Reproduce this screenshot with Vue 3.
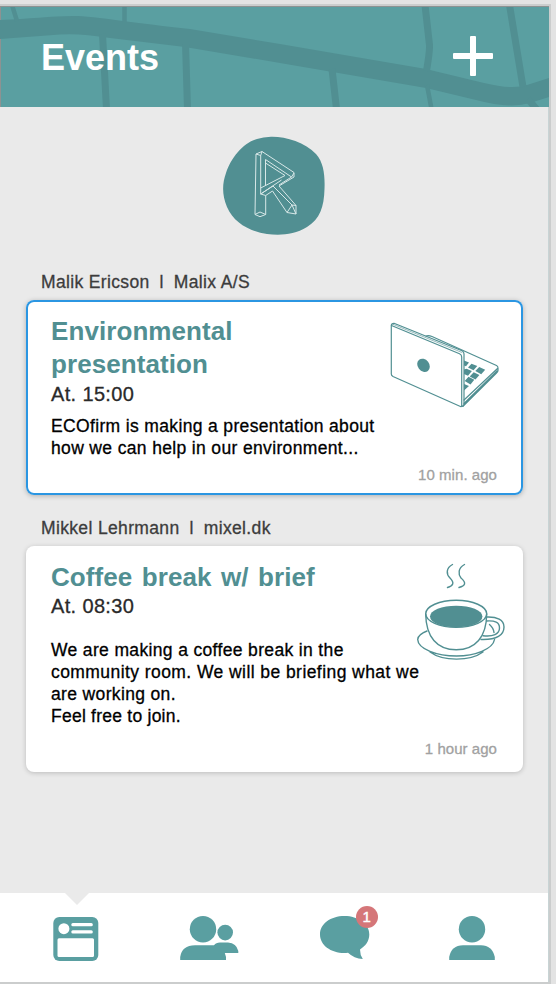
<script setup>
const events = [
  {
    id: 'environment',
    author: 'Malik Ericson',
    company: 'Malix A/S',
    title: ['Environmental', 'presentation'],
    time: 'At. 15:00',
    text: ['ECOfirm is making a presentation about', 'how we can help in our environment...'],
    ago: '10 min. ago',
    selected: true,
    art: 'laptop'
  },
  {
    id: 'coffee',
    author: 'Mikkel Lehrmann',
    company: 'mixel.dk',
    title: ['Coffee break w/ brief'],
    time: 'At. 08:30',
    text: [
      'We are making a coffee break in the',
      'community room. We will be briefing what we',
      'are working on.',
      'Feel free to join.'
    ],
    ago: '1 hour ago',
    selected: false,
    art: 'coffee'
  }
]
</script>

<template>
  <div class="frame">
    <div class="screen">
      <header class="top">
        <svg class="map" viewBox="0 6 549 100" width="549" height="100" aria-hidden="true">
          <path class="road" d="M0 19C30 18 50 15 73 15C95 15 140 23 190 28L280 43L426 68L484 82Q513 89 527 84L549 77V96L530 102Q510 108 476 99L426 87L280 62L185 46L110 37Q80 32 60 33.500L0 38Z" />
          <g class="lanes">
            <path class="thin" d="M12 4L17 20M124.500 4V22M427 84L431.500 108" />
            <path d="M102.500 33L106.500 108M185.500 42L187.500 108M332 68L336.500 108M425 4L429.500 44Q430 49 426.500 70M509.500 4L523 86M528 98L538 110" />
          </g>
        </svg>
        <h1>Events</h1>
        <svg class="plus" viewBox="0 0 40 40" width="40" height="40">
          <rect x="17" width="6" height="40" rx="1" />
          <rect y="17" width="40" height="6" rx="1" />
        </svg>
      </header>

      <main class="feed">
        <svg class="logo" viewBox="0 0 130 120" width="130" height="120">
          <path class="blob" d="M61 11.700C75 11.300 95 17 106 29C114 38 115 51 114.500 64C114 82 110 94 97 102C84 110 70 110.500 57 109C39 106 24 98 17 82C12 70 12 59 16 48C21 33 33 18 47 14Q53 12 61 11.700Z" />
          <path class="wire" d="M46 29L52 26.500L84 47.500V52L69 61L86 80.500V89L77 87.500L62.500 66L55.700 70.500V89.500L50 91.700L45 89.500ZM46 29L50.700 30.500L52 26.500M50.700 30.500V63L75 50.500L55.500 38V60.500M55.500 38V34.500L81.500 52L84 48M81.500 52L69 60M50.700 63V69L71.500 55M50.700 69L55.700 70.500M45 89.500L50 87L55.700 89.500M50.700 69L63 61L82 80L77 87.500M82 80L86 80.500M82 80L86 89" />
        </svg>

        <section v-for="event in events" :key="event.id" class="entry" :class="event.art">
          <p class="byline"><span>{{ event.author }}</span><span>l</span><span>{{ event.company }}</span></p>
          <article class="card" :class="{ selected: event.selected }">
            <h2><span v-for="line in event.title" :key="line">{{ line }}</span></h2>
            <p class="time">{{ event.time }}</p>
            <p class="body"><span v-for="line in event.text" :key="line">{{ line }}</span></p>
            <p class="ago">{{ event.ago }}</p>

            <svg v-if="event.art === 'laptop'" class="art" viewBox="0 0 130 110" width="130" height="110">
              <g class="line thinline">
                <path d="M11.300 64V15.500Q11.300 13.500 14 13.300L82 40.700Q84 41.700 84 44V94.500Q83.500 96.500 81 96.700L13 66.500Q11.300 65.500 11.300 64Z" />
                <path d="M11.500 15.500L79.500 43.700Q81.700 44.700 81.700 47V96.500M46 26Q48.500 25 52 26.500L116.500 55.500Q118 56.300 118 58V60.500Q118 61.700 116.500 63L83 96.300M117.500 58.500L84 90M117 61L84 93.500" />
                <path class="faint" d="M13 14.300L82 42.500" />
              </g>
              <ellipse cx="43.500" cy="55.300" rx="5.800" ry="7.100" transform="rotate(-38 43.500 55.300)" />
              <path d="M84 50.500L89 52.500L86 56.200L84 55.500ZM88 57.500L91.500 53.700L97.300 56L93.500 60.300ZM95.300 61L99.200 57L105.200 59.800L101.200 64.300ZM84 59.500L86.500 58.700L91.900 61L88 65.700L84 64ZM89.700 66.500L93.700 62.300L99.400 65L95.500 69.500ZM84.700 71L88.500 66.800L94.300 69.800L90.500 74.500ZM84 74L89 76L84 80.500Z" />
            </svg>

            <svg v-else class="art" viewBox="0 0 110 115" width="110" height="115">
              <g class="line">
                <path d="M47.500 9.500C41 13 41 19 45 23C50 28 48 31 42.500 32.500M59.500 9.500C53 13 53 19 56 23C62 28 60 31 54 32.500" />
                <path d="M22 76C14.500 79 12.700 82 12.700 84.500C13 94 32 101 51.500 101C70 101 88 94 89.500 84.500M25 97C38 106.500 65 106.500 78 97M84.500 69.500Q88.500 73 89 77.500" />
                <path d="M81.500 62C92 61.500 99 65 99 72C99 80 92 85 76 84.500M81.500 66C90 65.500 94.500 67 94.500 73C94.500 79 88 82 78 80.700" />
                <path class="cup" d="M20.700 59C21 82 32 94.800 51.200 94.800S81.500 82 81.700 59" />
                <ellipse cx="51.200" cy="58.800" rx="30.500" ry="13.500" />
              </g>
              <ellipse cx="51.200" cy="61.500" rx="26.200" ry="10.800" />
            </svg>
          </article>
        </section>
      </main>

      <nav class="tabs">
        <svg class="news" viewBox="0 0 46 46" width="46" height="46">
          <rect x=".3" y=".9" width="45" height="44" rx="6" />
          <g class="cut">
            <circle cx="10.900" cy="12.700" r="5.500" />
            <rect x="18.300" y="7" width="21.500" height="3.300" rx="1.500" />
            <rect x="18.300" y="14.300" width="21.500" height="3.300" rx="1.500" />
            <rect x="4.500" y="22.300" width="36.500" height="18.700" rx="1.500" />
          </g>
        </svg>
        <svg viewBox="0 0 60 46" width="60" height="46">
          <circle cx="23" cy="13.200" r="13.200" />
          <circle cx="45.200" cy="16.600" r="7.800" />
          <path d="M.2 44V41Q2 29.300 15 29.300H34Q36 26.500 40 26.500H48Q56.500 27 58.300 35V37H44.800L46 41V44Z" />
        </svg>
        <div class="chat">
          <svg viewBox="0 0 50 46" width="50" height="46">
            <path d="M24.500.1C38 .1 49.300 8 49.300 18.500C49.300 25 45.500 30 40 33.500Q40 39 42.800 43Q34 42.500 28 36.800Q26 37 24.500 37C10.500 37 0 29 0 18.500S10.500.1 24.500.1Z" />
          </svg>
          <span class="badge">1</span>
        </div>
        <svg viewBox="0 0 46 46" width="46" height="46">
          <circle cx="23" cy="13.200" r="13.200" />
          <path d="M.2 44V41Q2.500 29.300 14 29.300H32Q43 29.300 45.800 41V44Z" />
        </svg>
      </nav>
    </div>
  </div>
</template>

<style>
body { margin: 0; background: #e3e3e3; }
</style>

<style scoped>
* { box-sizing: border-box; }
h1, h2, p { margin: 0; }
svg { display: block; flex: none; }
.frame {
  width: 556px;
  height: 984px;
  padding-top: 4px;
  background: #e3e3e3;
  font-family: "Liberation Sans", Arial, sans-serif;
  overflow: hidden;
}
.screen {
  width: 551px;
  height: 980px;
  border: solid #cbcdcd;
  border-width: 2px 2px 2px 0;
  display: flex;
  flex-direction: column;
  background: #eaeaea;
}
.top {
  position: relative;
  height: 100.500px;
  flex: none;
  display: flex;
  justify-content: space-between;
  align-items: flex-start;
  padding: 29px 56px 0 40px;
  background: #5a9fa1;
  border-top: 1px solid #8d9292;
  border-left: 1px solid #8d9292;
}
.map { position: absolute; left: -1px; top: -.500px; }
.road { fill: #518f92; }
.lanes { fill: none; stroke: #518f92; stroke-width: 7; }
.thin { stroke-width: 4.500; }
h1 {
  position: relative;
  font-size: 36px;
  line-height: 44px;
  color: #fff;
}
.plus { position: relative; fill: #fff; }
.feed {
  flex: 1;
  display: flex;
  flex-direction: column;
  padding: 18.500px 26px 0;
  border-right: 1px solid #c8d4d5;
}
.logo { align-self: center; margin-left: 1px; }
.blob { fill: #518f92; }
.wire { fill: none; stroke: #d8e8e8; stroke-width: 1; stroke-linejoin: round; }
.entry { width: 497px; padding-top: 27px; }
.coffee { padding-top: 23px; }
.byline {
  display: flex;
  gap: 10px;
  height: 28px;
  padding-left: 15px;
  font-size: 17.500px;
  line-height: 20px;
  letter-spacing: .350px;
  color: #3c3c3c;
  -webkit-text-stroke: .300px;
}
.card {
  position: relative;
  display: flex;
  flex-direction: column;
  height: 195px;
  padding: 15px 26px 10px 25px;
  border-radius: 8px;
  background: #fff;
  box-shadow: 0 1px 5px rgba(0, 0, 0, .2);
}
.card.selected { box-shadow: inset 0 0 0 2px #2b96e2, 0 1px 5px rgba(0, 0, 0, .25); }
.coffee .card { height: 226px; padding-bottom: 13px; }
h2 {
  font-size: 26px;
  line-height: 33px;
  letter-spacing: .080px;
  word-spacing: 2.100px;
  color: #518f92;
}
.coffee h2 { height: 32px; }
h2 span, .body span { display: block; white-space: nowrap; }
.time {
  font-size: 20px;
  line-height: 26px;
  color: #2a2a2a;
  letter-spacing: .350px;
  -webkit-text-stroke: .300px;
}
.body {
  margin-top: 8px;
  font-size: 17.500px;
  line-height: 22px;
  letter-spacing: .350px;
  color: #000;
  -webkit-text-stroke: .300px;
}
.coffee .body { margin-top: 20px; }
.coffee .body span:nth-child(2) { letter-spacing: .430px; }
.coffee .body span:nth-child(4) { letter-spacing: .240px; }
.ago {
  margin-top: auto;
  align-self: flex-end;
  font-size: 15px;
  line-height: 20px;
  letter-spacing: .050px;
  color: #a1a1a1;
  -webkit-text-stroke: .300px;
}
.art { position: absolute; left: 354px; top: 10px; fill: #518f92; }
.coffee .art { left: 379px; top: 9px; }
.line { fill: none; stroke: #518f92; stroke-width: 1.400; stroke-linejoin: round; stroke-linecap: round; }
.thinline { stroke-width: 1.200; }
.faint { stroke-width: .600; }
.cup { fill: #fff; }
.tabs {
  position: relative;
  height: 89px;
  flex: none;
  display: flex;
  gap: 79.600px;
  padding: 23px 0 0 53px;
  background: #fff;
  fill: #5a9fa1;
  border-right: 1px solid #c8d4d5;
}
.news { margin-right: 1.400px; }
.tabs::before {
  content: "";
  position: absolute;
  left: 65px;
  top: 0;
  border: 12px solid transparent;
  border-top-color: #eaeaea;
  border-bottom: 0;
}
.cut { fill: #fff; }
.chat { position: relative; }
.badge {
  position: absolute;
  left: 36px;
  top: -10px;
  width: 22px;
  height: 22px;
  border-radius: 50%;
  background: #d57679;
  color: #fff;
  font-size: 15px;
  line-height: 22px;
  text-align: center;
  -webkit-text-stroke: .400px;
}
</style>
